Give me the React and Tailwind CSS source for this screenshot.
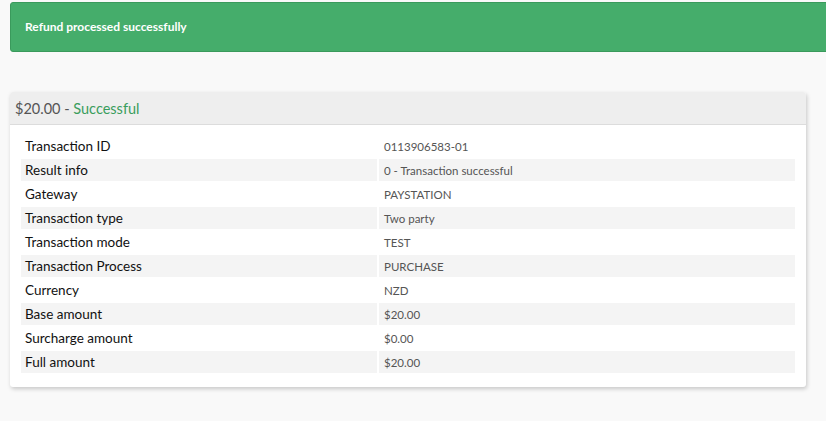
const rows = [
  ["Transaction ID", "0113906583-01"],
  ["Result info", "0 - Transaction successful"],
  ["Gateway", "PAYSTATION"],
  ["Transaction type", "Two party"],
  ["Transaction mode", "TEST"],
  ["Transaction Process", "PURCHASE"],
  ["Currency", "NZD"],
  ["Base amount", "$20.00"],
  ["Surcharge amount", "$0.00"],
  ["Full amount", "$20.00"],
]

export default function App() {
  return (
    <div className="min-h-[421px] overflow-hidden bg-[#f9f9f9] pl-[10px] pt-[2px] font-['Lato',sans-serif]">
      {/* Alert */}
      <div className="-mr-[10px] flex h-[50px] items-center rounded-[3px] border border-[#3a9a5c] bg-[#45ad6b] pl-[14px] text-[12px] font-bold text-white">
        Refund processed successfully
      </div>

      {/* Card */}
      <div className="mt-[40px] w-[796px] rounded-[3px] bg-white shadow-[1px_2px_4px_rgba(0,0,0,0.2)]">
        <div className="flex h-[33px] items-center rounded-t-[3px] border-b border-[#dcdcdc] bg-[#eeeeee] px-[5px] pt-[1px] text-[14.5px] text-[#555]">
          $20.00 -&nbsp;<span className="text-[#3a9d5d]">Successful</span>
        </div>
        <div className="px-[9px] pb-[12px] pt-[8px]">
          <table className="w-full border-separate border-spacing-[2px]">
            <tbody>
              {rows.map(([label, value], i) => (
                <tr key={label} className={i % 2 === 1 ? "bg-[#f4f4f4]" : ""}>
                  <td className="h-[22px] w-[356px] p-0 pl-[4px] pt-[1px] text-[13.5px] leading-none text-[#111]">
                    {label}
                  </td>
                  <td className="h-[22px] p-0 pl-[5px] pt-[1px] text-[11.5px] leading-none text-[#555]">
                    {value}
                  </td>
                </tr>
              ))}
            </tbody>
          </table>
        </div>
      </div>
    </div>
  )
}
